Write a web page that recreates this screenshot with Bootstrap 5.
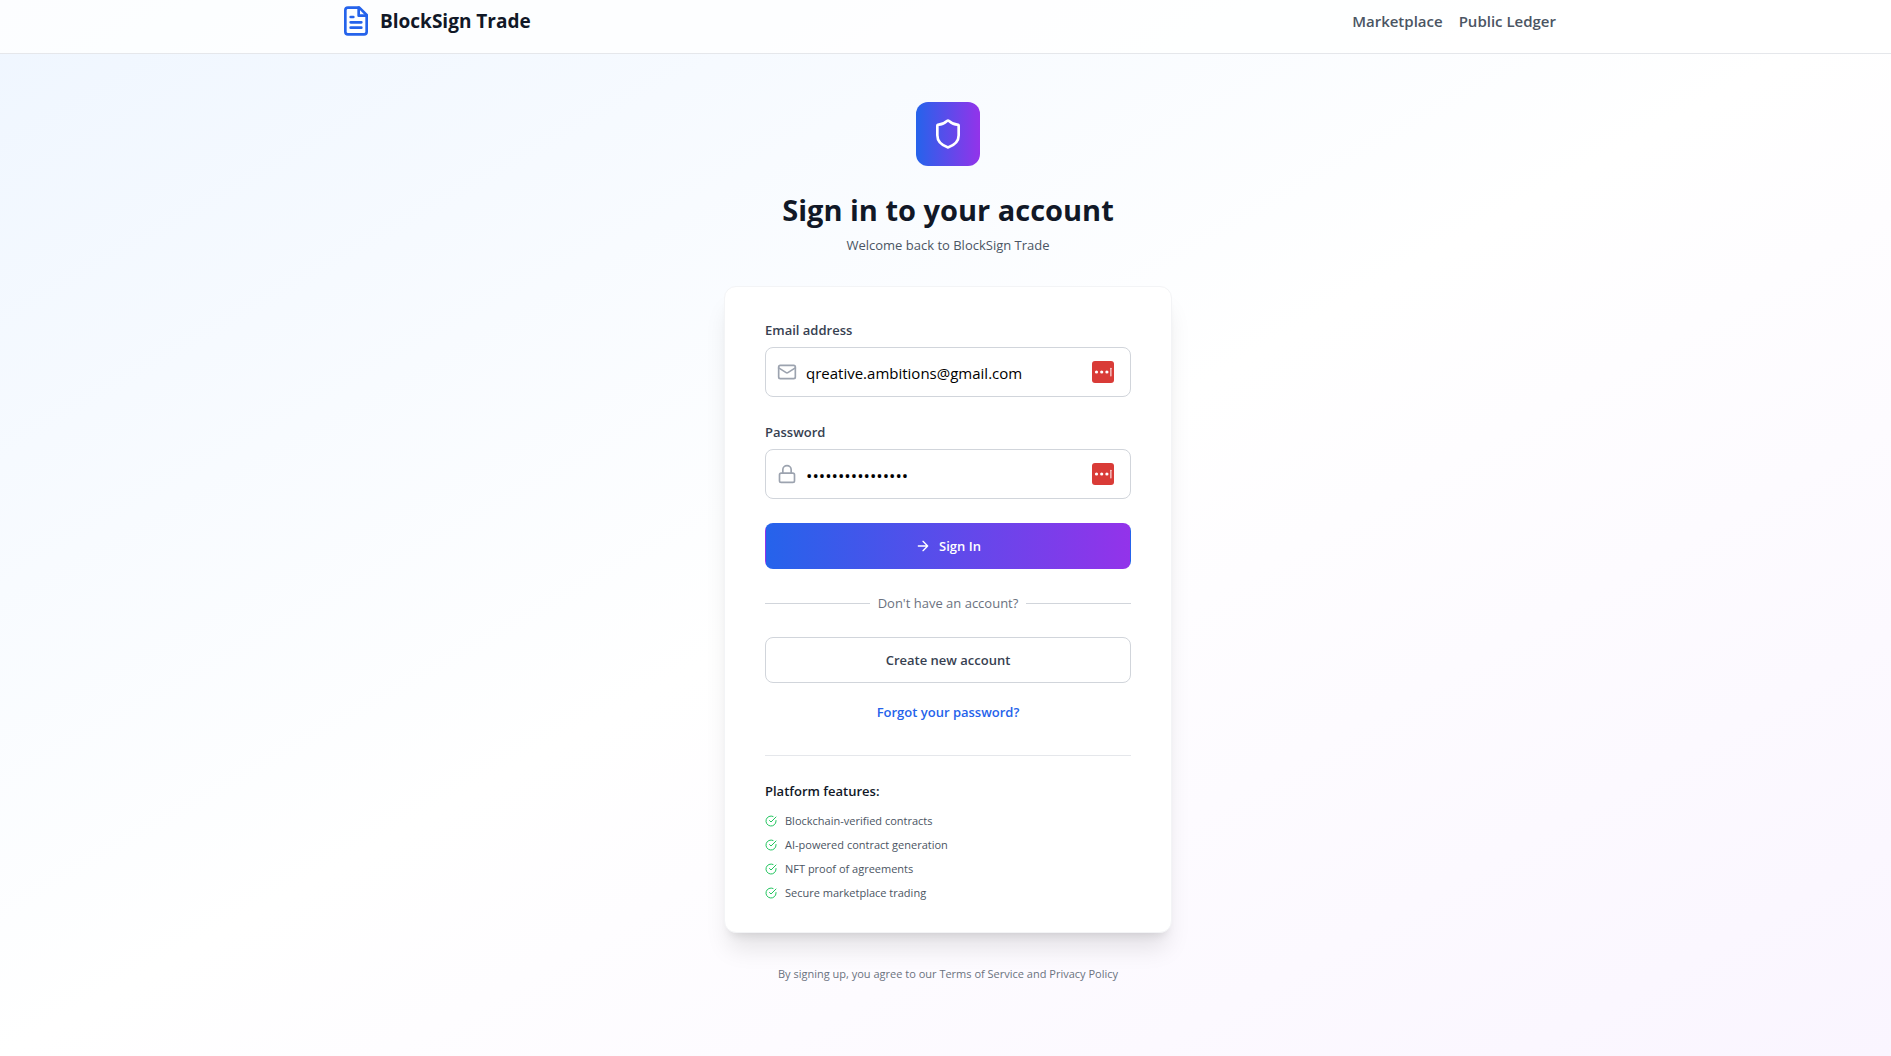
<!DOCTYPE html>
<html lang="en">
<head>
<meta charset="utf-8">
<meta name="viewport" content="width=device-width, initial-scale=1">
<title>Sign in - BlockSign Trade</title>
<link href="https://cdn.jsdelivr.net/npm/bootstrap@5.3.0/dist/css/bootstrap.min.css" rel="stylesheet">
<style>
  :root {
    --ink: #111827;
    --ink-2: #374151;
    --ink-3: #4b5563;
    --ink-4: #6b7280;
    --line: #d1d5db;
    --line-soft: #e5e7eb;
    --blue: #2563eb;
    --purple: #9333ea;
  }
  body {
    font-family: "Open Sans", "Noto Sans", sans-serif;
    font-size: 13px;
    line-height: 22px;
    color: var(--ink);
  }
  .page-shell {
    min-height: 100vh;
    background: linear-gradient(to bottom right, #eff6ff, #fff 50%, #faf5ff);
  }
  .site-header {
    padding: 5px 0 16px 5px;
    background: rgba(255, 255, 255, .8);
    border-bottom: 1px solid var(--line-soft);
  }
  .site-inner { max-width: 1216px; }
  .brand { font-size: 19px; line-height: 32px; font-weight: 700; color: var(--ink); gap: 8px; }
  .site-nav a { font-size: 15px; line-height: 24px; font-weight: 600; color: var(--ink-3); }
  .site-main { padding: 48px 0 48px 5px; }
  .auth-column { max-width: 448px; }
  .shield-tile {
    width: 64px; height: 64px; border-radius: 12px; margin-bottom: 24px;
    background: linear-gradient(to right, var(--blue), var(--purple));
  }
  .auth-title { font-size: 29px; line-height: 40px; font-weight: 700; }
  .auth-sub { color: var(--ink-3); }
  .auth-card {
    margin: 30px 0 32px; padding: 32px 40px 30px;
    background: #fff; border: 1px solid #f3f4f6; border-radius: 12px;
    box-shadow: 0 20px 25px -5px rgba(0, 0, 0, .1), 0 8px 10px -6px rgba(0, 0, 0, .1);
  }
  .auth-form { gap: 24px; }
  .field-label { color: var(--ink-2); font-weight: 600; margin-bottom: 6px; }
  .field-input {
    height: 50px; padding: 2px 48px 0 40px;
    font-size: 15px; line-height: 24px; color: #000;
    border-color: var(--line); border-radius: 8px;
  }
  .field-input[type="password"] { font-size: 17px; }
  .field-icon { left: 12px; color: #9ca3af; }
  .field-manager { right: 17px; width: 22px; height: 22px; }
  .auth-btn { height: 46px; border-radius: 8px; font-size: 13px; line-height: 20px; font-weight: 600; }
  .btn-gradient, .btn-gradient:hover {
    color: #fff; border-color: transparent;
    background-image: linear-gradient(to right, var(--blue), var(--purple));
  }
  .btn-plain { color: var(--ink-2); background: #fff; border-color: var(--line); }
  .divider { color: var(--ink-4); line-height: 20px; }
  .divider::before, .divider::after { content: ""; flex: 1; border-top: 1px solid var(--line); }
  .forgot { margin: 16px 0 30px; line-height: 26px; font-weight: 600; }
  .forgot a { color: var(--blue); }
  .features { border-top: 1px solid var(--line-soft); padding-top: 24px; }
  .features-title { font-size: 13px; line-height: 22px; font-weight: 600; margin-bottom: 10px; }
  .features-list { gap: 6px; font-size: 11px; line-height: 18px; color: var(--ink-3); }
  .features-list svg { color: #22c55e; }
  .legal { font-size: 11px; line-height: 18px; color: var(--ink-4); }
</style>
<script src="https://cdn.jsdelivr.net/npm/bootstrap@5.3.0/dist/js/bootstrap.bundle.min.js" defer></script>
</head>
<body>
<svg class="d-none" aria-hidden="true">
  <symbol id="i-manager" viewBox="0 0 22 22">
    <rect width="22" height="22" rx="3" fill="#d93b37"/>
    <g fill="#fff"><circle cx="4.500" cy="11" r="1.600"/><circle cx="9.700" cy="11" r="1.600"/><circle cx="14.900" cy="11" r="1.600"/><rect x="18.400" y="6.800" width="1" height="8.600" rx=".4"/></g>
  </symbol>
  <symbol id="i-check" viewBox="0 0 24 24">
    <path d="M22 11.08V12a10 10 0 1 1-5.93-9.14"/><path d="m9 11 3 3L22 4"/>
  </symbol>
</svg>
<div class="page-shell">
  <header class="site-header">
    <div class="site-inner mx-auto d-flex justify-content-between align-items-center">
      <a class="brand d-flex align-items-center text-decoration-none" href="#">
        <svg width="32" height="32" viewBox="0 0 24 24" fill="none" stroke="#2563eb" stroke-width="2" stroke-linecap="round" stroke-linejoin="round" aria-hidden="true"><path d="M14.500 2H6a2 2 0 0 0-2 2v16a2 2 0 0 0 2 2h12a2 2 0 0 0 2-2V7.500z"/><path d="M14 2v6h6M16 13H8M16 17H8M10 9H8"/></svg>
        <span>BlockSign Trade</span>
      </a>
      <nav class="site-nav d-flex gap-3">
        <a class="text-decoration-none" href="#">Marketplace</a>
        <a class="text-decoration-none" href="#">Public Ledger</a>
      </nav>
    </div>
  </header>

  <main class="site-main">
    <div class="auth-column mx-auto">
      <div class="text-center">
        <div class="shield-tile mx-auto d-flex align-items-center justify-content-center">
          <svg width="32" height="32" viewBox="0 0 24 24" fill="none" stroke="#fff" stroke-width="2" stroke-linecap="round" stroke-linejoin="round" aria-hidden="true"><path d="M20 13c0 5-3.500 7.500-7.660 8.950a1 1 0 0 1-.67-.01C7.500 20.500 4 18 4 13V6a1 1 0 0 1 1-1c2 0 4.500-1.200 6.240-2.720a1.170 1.170 0 0 1 1.520 0C14.510 3.810 17 5 19 5a1 1 0 0 1 1 1z"/></svg>
        </div>
        <h1 class="auth-title mb-1">Sign in to your account</h1>
        <p class="auth-sub mb-0">Welcome back to BlockSign Trade</p>
      </div>

      <section class="auth-card">
        <form class="auth-form d-flex flex-column">
          <div>
            <label class="field-label d-block" for="email">Email address</label>
            <div class="position-relative d-flex align-items-center">
              <input class="form-control field-input" id="email" type="email" value="qreative.ambitions@gmail.com">
              <svg class="field-icon position-absolute" width="20" height="20" viewBox="0 0 24 24" fill="none" stroke="currentColor" stroke-width="2" stroke-linecap="round" stroke-linejoin="round" aria-hidden="true"><rect x="2" y="4" width="20" height="16" rx="2"/><path d="m22 7-8.970 5.700a1.940 1.940 0 0 1-2.060 0L2 7"/></svg>
              <svg class="field-manager position-absolute" aria-hidden="true"><use href="#i-manager"/></svg>
            </div>
          </div>
          <div>
            <label class="field-label d-block" for="password">Password</label>
            <div class="position-relative d-flex align-items-center">
              <input class="form-control field-input" id="password" type="password" value="blocksign-trade1">
              <svg class="field-icon position-absolute" width="20" height="20" viewBox="0 0 24 24" fill="none" stroke="currentColor" stroke-width="2" stroke-linecap="round" stroke-linejoin="round" aria-hidden="true"><rect x="3" y="11" width="18" height="11" rx="2"/><path d="M7 11V7a5 5 0 0 1 10 0v4"/></svg>
              <svg class="field-manager position-absolute" aria-hidden="true"><use href="#i-manager"/></svg>
            </div>
          </div>
          <button class="btn auth-btn btn-gradient w-100 d-flex align-items-center justify-content-center gap-2" type="submit">
            <svg width="16" height="16" viewBox="0 0 24 24" fill="none" stroke="currentColor" stroke-width="2" stroke-linecap="round" stroke-linejoin="round" aria-hidden="true"><path d="M5 12h14M12 5l7 7-7 7"/></svg>
            Sign In
          </button>
          <div class="divider d-flex align-items-center gap-2">Don't have an account?</div>
          <button class="btn auth-btn btn-plain w-100" type="button">Create new account</button>
        </form>
        <p class="forgot text-center"><a class="text-decoration-none" href="#">Forgot your password?</a></p>
        <div class="features">
          <h2 class="features-title">Platform features:</h2>
          <ul class="features-list list-unstyled d-flex flex-column mb-0">
            <li class="d-flex align-items-center gap-2"><svg width="12" height="12" fill="none" stroke="currentColor" stroke-width="2" stroke-linecap="round" stroke-linejoin="round" aria-hidden="true"><use href="#i-check"/></svg>Blockchain-verified contracts</li>
            <li class="d-flex align-items-center gap-2"><svg width="12" height="12" fill="none" stroke="currentColor" stroke-width="2" stroke-linecap="round" stroke-linejoin="round" aria-hidden="true"><use href="#i-check"/></svg>AI-powered contract generation</li>
            <li class="d-flex align-items-center gap-2"><svg width="12" height="12" fill="none" stroke="currentColor" stroke-width="2" stroke-linecap="round" stroke-linejoin="round" aria-hidden="true"><use href="#i-check"/></svg>NFT proof of agreements</li>
            <li class="d-flex align-items-center gap-2"><svg width="12" height="12" fill="none" stroke="currentColor" stroke-width="2" stroke-linecap="round" stroke-linejoin="round" aria-hidden="true"><use href="#i-check"/></svg>Secure marketplace trading</li>
          </ul>
        </div>
      </section>
      <p class="legal text-center mb-0">By signing up, you agree to our Terms of Service and Privacy Policy</p>
    </div>
  </main>
</div>
</body>
</html>
